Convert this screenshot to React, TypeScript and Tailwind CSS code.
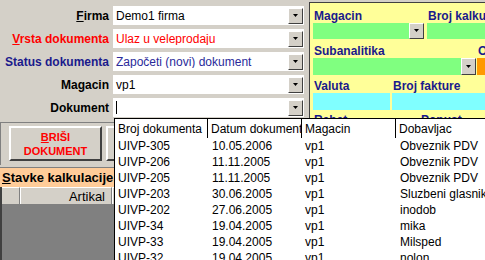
import React from "react";

const rows = [
  ["UIVP-305", "10.05.2006", "vp1", "Obveznik PDV"],
  ["UIVP-206", "11.11.2005", "vp1", "Obveznik PDV"],
  ["UIVP-205", "11.11.2005", "vp1", "Obveznik PDV"],
  ["UIVP-203", "30.06.2005", "vp1", "Sluzbeni glasnik"],
  ["UIVP-202", "27.06.2005", "vp1", "inodob"],
  ["UIVP-34", "19.04.2005", "vp1", "mika"],
  ["UIVP-33", "19.04.2005", "vp1", "Milsped"],
  ["UIVP-32", "19.04.2005", "vp1", "nolon"],
];

function DropBtn({ className = "" }: { className?: string }) {
  return (
    <div
      className={`flex h-[16px] w-[15px] shrink-0 items-center justify-center border border-t-white border-l-white border-r-[#404040] border-b-[#404040] bg-[#d4d0c8] ${className}`}
    >
      <svg width="7" height="4" viewBox="0 0 7 4">
        <path d="M1 0h5L3.5 3z" fill="#000" />
      </svg>
    </div>
  );
}

function Combo({ value, color }: { value: string; color: string }) {
  return (
    <div className="flex h-[19px] w-[191px] items-center bg-white pr-[1px]">
      <span className={`flex-1 truncate pl-[3px] ${color}`}>{value}</span>
      <DropBtn />
    </div>
  );
}

function Row({
  label,
  ul,
  labelColor,
  value,
  valueColor,
}: {
  label: string;
  ul?: boolean;
  labelColor: string;
  value: string;
  valueColor: string;
}) {
  return (
    <div className="flex h-[19px] items-center">
      <div className={`w-[109px] whitespace-nowrap text-right font-bold ${labelColor}`}>
        {ul ? (
          <>
            <span className="underline">{label[0]}</span>
            {label.slice(1)}
          </>
        ) : (
          label
        )}
      </div>
      <div className="ml-[4px]">
        {value === "|" ? (
          <div className="flex h-[19px] w-[191px] items-center bg-white pr-[1px]">
            <span className="ml-[3px] h-[13px] w-[1px] bg-black" />
            <span className="flex-1" />
            <DropBtn />
          </div>
        ) : (
          <Combo value={value} color={valueColor} />
        )}
      </div>
    </div>
  );
}

export default function App() {
  return (
    <div className="relative h-[260px] w-[485px] overflow-hidden bg-[#d4d0c8] font-['Liberation_Sans',Arial,sans-serif] text-[12px] leading-none text-black">
      <div className="flex">
        {/* Left form */}
        <div className="w-[309px] shrink-0">
          <div className="flex flex-col gap-[4px] pt-[6px]">
            <Row label="Firma" ul labelColor="text-black" value="Demo1 firma" valueColor="text-black" />
            <Row label="Vrsta dokumenta" ul labelColor="text-[#ff0000]" value="Ulaz u veleprodaju" valueColor="text-[#ff0000]" />
            <Row label="Status dokumenta" labelColor="text-[#1a1a8c]" value="Započeti (novi) dokument" valueColor="text-[#2a2a9a]" />
            <Row label="Magacin" labelColor="text-black" value="vp1" valueColor="text-black" />
            <Row label="Dokument" labelColor="text-black" value="|" valueColor="text-black" />
          </div>

          {/* Buttons frame */}
          <div className="mt-[5px] flex h-[43px] gap-[4px] border-t border-l border-t-[#808080] border-l-[#808080] pl-[8px] pt-[3px]">
            <div className="flex h-[35px] w-[93px] flex-col items-center justify-center border-2 border-t-white border-l-white border-r-[#404040] border-b-[#404040] text-[11px] font-bold leading-[14px] text-[#ff0000]">
              <span>
                <span className="underline">B</span>RIŠI
              </span>
              <span>DOKUMENT</span>
            </div>
            <div className="h-[35px] w-[93px] border-2 border-t-white border-l-white border-r-[#404040] border-b-[#404040]" />
          </div>

          {/* Stavke */}
          <div className="mt-[2px] flex h-[20px] items-center border-t border-[#808080] bg-[#ffcc99] pl-[2px] text-[13px] font-bold">
            <span className="underline">S</span>tavke kalkulacije
          </div>
          <div className="border-l-2 border-[#404040] bg-[#808080]">
            <div className="flex h-[18px] border-b border-[#808080] bg-[#d4d0c8]">
              <div className="w-[18px] border-r border-t border-white border-r-[#808080] bg-[#d4d0c8]" />
              <div className="flex w-[92px] items-center justify-end border-t border-l border-r border-white border-r-[#808080] bg-[#d4d0c8] pr-[6px] text-[13px]">
                Artikal
              </div>
              <div className="flex-1 border-t border-l border-white bg-[#d4d0c8]" />
            </div>
            <div className="h-[60px]" />
          </div>
        </div>

        {/* Right yellow panel */}
        <div className="mt-[2px] h-[258px] flex-1 whitespace-nowrap border-t border-l border-[#404040] bg-[#ffff99] pl-[3px] font-bold text-[#1a1a8c]">
          <div className="flex h-[20px] items-end pb-[1px]">
            <span className="ml-[1px] w-[114px] shrink-0">Magacin</span>
            <span>Broj kalkulacije</span>
          </div>
          <div className="flex h-[16px]">
            <div className="flex w-[111px] justify-end bg-[#80ff80]">
              <DropBtn className="h-[16px]" />
            </div>
            <div className="ml-[3px] flex-1 bg-[#80ff80]" />
          </div>
          <div className="flex h-[19px] items-end pb-[1px]">
            <span className="ml-[1px] w-[164px] shrink-0">Subanalitika</span>
            <span>Opis</span>
          </div>
          <div className="flex h-[17px]">
            <div className="flex w-[163px] justify-end bg-[#80ff80]">
              <DropBtn className="h-[17px]" />
            </div>
            <div className="ml-[1px] flex-1 bg-[#ff9900]" />
          </div>
          <div className="flex h-[18px] items-end pb-[1px]">
            <span className="ml-[1px] w-[79px] shrink-0">Valuta</span>
            <span>Broj fakture</span>
          </div>
          <div className="flex h-[17px]">
            <div className="w-[77px] bg-[#80ffff]" />
            <div className="ml-[2px] flex-1 bg-[#80ffff]" />
          </div>
          <div className="flex h-[16px] items-end">
            <span className="ml-[1px] w-[107px] shrink-0">Rabat</span>
            <span>Popust</span>
          </div>
        </div>
      </div>

      {/* Dropdown list */}
      <div className="absolute left-[114px] top-[118px] w-[400px] border border-black bg-white">
        <div className="flex h-[19px] items-center">
          <div className="flex h-full w-[93px] items-center border-r border-black pl-[3px]">Broj dokumenta</div>
          <div className="flex h-full w-[94px] items-center overflow-hidden whitespace-nowrap border-r border-black pl-[3px]">
            Datum dokumenta
          </div>
          <div className="flex h-full w-[94px] items-center border-r border-black pl-[3px]">Magacin</div>
          <div className="flex h-full flex-1 items-center pl-[3px]">Dobavljac</div>
        </div>
        {rows.map((r) => (
          <div key={r[0]} className="flex h-[16px] items-center">
            <div className="w-[93px] pl-[3px]">{r[0]}</div>
            <div className="w-[94px] pl-[4px]">{r[1]}</div>
            <div className="w-[94px] pl-[3px]">{r[2]}</div>
            <div className="flex-1 whitespace-nowrap pl-[4px]">{r[3]}</div>
          </div>
        ))}
      </div>
    </div>
  );
}
